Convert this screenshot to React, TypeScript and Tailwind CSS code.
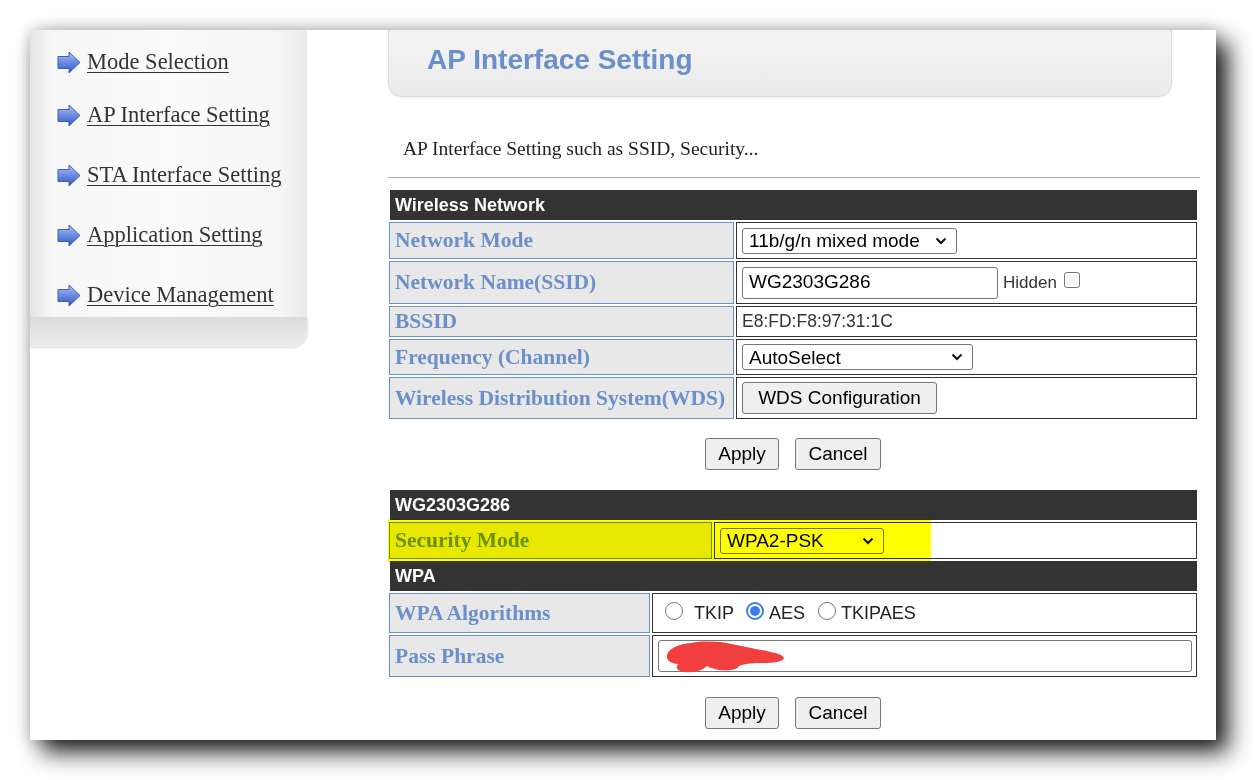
import React from 'react'

const sans = "font-['Liberation_Sans',Arial,sans-serif]"
const serif = "font-['Liberation_Serif','Times_New_Roman',serif]"

const Arrow = () => (
  <svg width="24" height="23" viewBox="0 0 24 23" className="shrink-0">
    <defs>
      <linearGradient id="arrowFill" x1="0" y1="0" x2="0" y2="1">
        <stop offset="0" stopColor="#b0c4f4" />
        <stop offset="0.45" stopColor="#6f90e4" />
        <stop offset="1" stopColor="#3656c0" />
      </linearGradient>
    </defs>
    <path d="M1 5.5 H12 V1 L23 11.5 L12 22 V17.5 H1 Z" fill="url(#arrowFill)" stroke="#3f5db6" strokeWidth="1" strokeLinejoin="round" />
  </svg>
)

const Chevron = () => (
  <svg width="12" height="8" viewBox="0 0 12 8" className="shrink-0">
    <path d="M1.5 1.5 L6 6 L10.5 1.5" fill="none" stroke="#111" strokeWidth="2" />
  </svg>
)

const Select = ({ value, w }: { value: string; w: string }) => (
  <div className={`${w} h-[26px] flex items-center justify-between border border-[#767676] rounded-[3px] bg-white pl-[6px] pr-[9px] text-[19px] text-black leading-none ${sans}`}>
    <span>{value}</span>
    <Chevron />
  </div>
)

const Btn = ({ children, w }: { children: React.ReactNode; w: string }) => (
  <div className={`${w} h-[32px] flex items-center justify-center bg-[#efefef] border border-[#767676] rounded-[3px] text-[19px] text-black ${sans}`}>
    {children}
  </div>
)

const Head = ({ children }: { children: React.ReactNode }) => (
  <div className={`h-[30px] ml-px bg-[#333] flex items-center pl-[5px] text-white font-bold text-[18px] ${sans}`}>{children}</div>
)

const Row = ({ label, lw, h, children }: { label: string; lw: string; h: string; children?: React.ReactNode }) => (
  <div className={`flex gap-[2px] ${h}`}>
    <div className={`${lw} shrink-0 border border-[#6a8fcb] bg-[#e8e8e8] flex items-center pl-[5px] font-bold text-[21.5px] text-[#6a8fcb] ${serif}`}>{label}</div>
    <div className={`flex-1 border border-[#333] bg-white flex items-center pl-[5px] ${sans}`}>{children}</div>
  </div>
)

const Radio = ({ checked }: { checked?: boolean }) =>
  checked ? (
    <div className="w-[18px] h-[18px] rounded-full border-2 border-[#3b7cf2] bg-white flex items-center justify-center mb-[4px]">
      <div className="w-[10px] h-[10px] rounded-full bg-[#3b7cf2]" />
    </div>
  ) : (
    <div className="w-[18px] h-[18px] rounded-full border border-[#767676] bg-white mb-[4px]" />
  )

const menu = ['Mode Selection', 'AP Interface Setting', 'STA Interface Setting', 'Application Setting', 'Device Management']
const menuTop = ['mt-[17px]', 'mt-[23px]', 'mt-[30px]', 'mt-[30px]', 'mt-[30px]']

export default function App() {
  return (
    <div className="w-[1256px] h-[780px] bg-white overflow-hidden pt-[30px] pl-[30px]">
      <div className="w-[1186px] h-[710px] bg-white flex shadow-[0_0_14px_rgba(0,0,0,0.22),12px_12px_22px_rgba(0,0,0,0.88)]">
        {/* sidebar */}
        <div className="w-[277px] h-[317px] flex flex-col">
          <div className="flex-1 flex flex-col bg-[linear-gradient(to_right,#e4e4e4_0%,#f7f7f7_8%,#fbfbfb_50%,#f6f6f6_90%,#e9e9e9_100%)]">
            {menu.map((m, i) => (
              <div key={m} className={`flex items-center h-[30px] pl-[27px] gap-[6px] ${menuTop[i]}`}>
                <Arrow />
                <span className={`text-[22.5px] leading-[30px] text-[#333] underline decoration-1 underline-offset-[3px] ${serif}`}>{m}</span>
              </div>
            ))}
          </div>
          <div className="h-[30px] rounded-br-[16px] bg-gradient-to-b from-[#dcdcdc] to-[#ececec] shadow-[1px_1px_2px_rgba(0,0,0,0.12)]" />
        </div>

        {/* main */}
        <div className="ml-[81px] w-[812px] flex flex-col">
          <div className="w-[784px] h-[67px] rounded-b-[14px] border border-t-0 border-[#dadada] bg-gradient-to-b from-[#f4f4f4] to-[#ebebeb] shadow-[0_1px_2px_rgba(0,0,0,0.08)] pl-[38px] pt-[12px]">
            <div className={`text-[28px] leading-[36px] font-bold text-[#6a8fcb] ${sans}`}>AP Interface Setting</div>
          </div>

          <div className={`mt-[40px] pl-[15px] text-[19.5px] leading-[24px] text-[#222] ${serif}`}>AP Interface Setting such as SSID, Security...</div>
          <div className="mt-[16px] h-px bg-[#aaa]" />

          <div className="mt-[12px] ml-px w-[808px] flex flex-col gap-[2px]">
            <Head>Wireless Network</Head>
            <Row label="Network Mode" lw="w-[345px]" h="h-[37px]">
              <Select value="11b/g/n mixed mode" w="w-[215px]" />
            </Row>
            <Row label="Network Name(SSID)" lw="w-[345px]" h="h-[43px]">
              <div className="w-[256px] h-[32px] flex items-center border border-[#767676] rounded-[3px] pl-[6px] text-[19px] text-black">WG2303G286</div>
              <span className="ml-[5px] text-[17px] text-[#333]">Hidden</span>
              <div className="ml-[7px] mb-[6px] w-[16px] h-[16px] rounded-[3px] border border-[#767676] bg-white" />
            </Row>
            <Row label="BSSID" lw="w-[345px]" h="h-[31px]">
              <span className="text-[17.5px] text-[#333]">E8:FD:F8:97:31:1C</span>
            </Row>
            <Row label="Frequency (Channel)" lw="w-[345px]" h="h-[36px]">
              <Select value="AutoSelect" w="w-[231px]" />
            </Row>
            <Row label="Wireless Distribution System(WDS)" lw="w-[345px]" h="h-[42px]">
              <Btn w="w-[195px]">WDS Configuration</Btn>
            </Row>
          </div>

          <div className="mt-[19px] ml-px w-[808px] flex justify-center gap-[16px]">
            <Btn w="w-[74px]">Apply</Btn>
            <Btn w="w-[86px]">Cancel</Btn>
          </div>

          <div className="mt-[20px] ml-px w-[808px] flex flex-col gap-[2px] relative">
            <Head>WG2303G286</Head>
            <Row label="Security Mode" lw="w-[323px]" h="h-[37px]">
              <Select value="WPA2-PSK" w="w-[164px]" />
            </Row>
            <Head>WPA</Head>
            <Row label="WPA Algorithms" lw="w-[261px]" h="h-[40px]">
              <div className={`flex items-center pl-[7px] text-[18px] text-[#222] ${sans}`}>
                <Radio />
                <span className="ml-[11px]">TKIP</span>
                <div className="ml-[12px]"><Radio checked /></div>
                <span className="ml-[5px]">AES</span>
                <div className="ml-[13px]"><Radio /></div>
                <span className="ml-[5px]">TKIPAES</span>
              </div>
            </Row>
            <Row label="Pass Phrase" lw="w-[261px]" h="h-[42px]">
              <div className="relative w-[534px] h-[32px] border border-[#767676] rounded-[3px] bg-white">
                <svg width="122" height="32" viewBox="0 0 122 32" className="absolute left-[4px] top-0">
                  <path d="M4 14 C6 7 16 3 28 2 C40 0 56 0 68 3 C80 5 92 8 104 10 C112 12 119 13 121 17 C120 21 110 22 98 22 C88 22 80 23 76 25 C74 29 66 30 56 29 C50 28 46 26 44 25 C40 29 32 32 22 31 C14 30 12 27 15 23 C8 22 3 20 4 14 Z" fill="#f13f3f" />
                </svg>
              </div>
            </Row>
            {/* highlighter mark */}
            <div className="absolute left-[-1px] top-[29px] w-[543px] h-[43px] bg-[#ffff00] mix-blend-multiply" />
          </div>

          <div className="mt-[20px] ml-px w-[808px] flex justify-center gap-[16px]">
            <Btn w="w-[74px]">Apply</Btn>
            <Btn w="w-[86px]">Cancel</Btn>
          </div>
        </div>
      </div>
    </div>
  )
}
